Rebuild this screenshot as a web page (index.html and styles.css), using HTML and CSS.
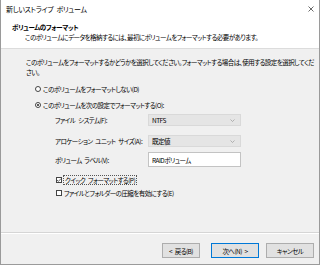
FILE: index.html
```html
<!DOCTYPE html>
<html lang="ja">
<head>
<meta charset="utf-8">
<link rel="stylesheet" href="styles.css">
</head>
<body>
<div class="window">
  <div class="top">
    <div class="titlebar">
      <span class="title">新しいストライプ ボリューム</span>
      <svg class="close" width="6" height="6" viewBox="0 0 6 6"><path d="M0.5 0.5 L5.5 5.5 M5.5 0.5 L0.5 5.5" stroke="#444" stroke-width="0.8" fill="none"/></svg>
    </div>
    <div class="header">
      <div class="h-title">ボリュームのフォーマット</div>
      <div class="h-sub">このボリュームにデータを格納するには、最初にボリュームをフォーマットする必要があります。</div>
    </div>
  </div>
  <div class="body">
    <p class="intro">このボリュームをフォーマットするかどうかを選択してください。フォーマットする場合は、使用する設定を選択してくだ<br>さい。</p>
    <div class="radio-row first"><span class="radio"></span><span>このボリュームをフォーマットしない(D)</span></div>
    <div class="radio-row second"><span class="radio on"></span><span>このボリュームを次の設定でフォーマットする(O):</span></div>
    <div class="form">
      <div class="field-row">
        <span class="label">ファイル システム(F):</span>
        <div class="combo"><span>NTFS</span><svg width="5" height="3" viewBox="0 0 5 3"><path d="M0.5 0.5 L2.5 2.5 L4.5 0.5" stroke="#999" stroke-width="0.7" fill="none"/></svg></div>
      </div>
      <div class="field-row r2">
        <span class="label">アロケーション ユニット サイズ(A):</span>
        <div class="combo"><span>既定値</span><svg width="5" height="3" viewBox="0 0 5 3"><path d="M0.5 0.5 L2.5 2.5 L4.5 0.5" stroke="#999" stroke-width="0.7" fill="none"/></svg></div>
      </div>
      <div class="field-row r3">
        <span class="label">ボリューム ラベル(V):</span>
        <div class="textbox">RAIDボリューム</div>
      </div>
    </div>
    <div class="check-row c1">
      <span class="checkbox"><svg width="6" height="6" viewBox="0 0 6 6"><path d="M1 3 L2.4 4.4 L5 1.6" stroke="#222" stroke-width="0.7" fill="none"/></svg></span>
      <span class="focus">クイック フォーマットする(P)</span>
    </div>
    <div class="check-row c2">
      <span class="checkbox"></span>
      <span>ファイルとフォルダーの圧縮を有効にする(E)</span>
    </div>
  </div>
  <div class="footer">
    <div class="btn back">&lt; 戻る(B)</div>
    <div class="btn next">次へ(N) &gt;</div>
    <div class="btn cancel">キャンセル</div>
  </div>
</div>
</body>
</html>
```
FILE: styles.css
```css
* { box-sizing: border-box; margin: 0; padding: 0; }
html, body { margin: 0; width: 320px; height: 265px; overflow: hidden; }
body {
  font-family: "Noto Sans CJK JP", "Noto Sans", sans-serif;
  font-size: 6.5px;
  letter-spacing: -0.55px;
  word-spacing: 1.8px;
  color: #000;
  font-feature-settings: "palt";
  background: #f0f0f0;
  white-space: nowrap;
}
.window {
  width: 320px;
  height: 265px;
  display: flex;
  flex-direction: column;
  border: 1px solid #9a9a9a;
  border-top: none;
  background: #f0f0f0;
}
.top {
  flex: none;
  height: 49px;
  background: #fff;
  border-bottom: 1px solid #dcdcdc;
}
.titlebar {
  height: 18px;
  display: flex;
  align-items: center;
  justify-content: space-between;
  padding: 0 5px 0 5px;
  line-height: 10px;
}
.title { font-size: 7px; letter-spacing: -0.3px; }
.close { display: block; }
.header { padding: 4px 0 0 11px; line-height: 10px; }
.h-title { font-weight: bold; letter-spacing: -0.35px; }
.h-sub { padding-left: 13px; }
.body { flex: 1; padding: 8px 0 0 25px; line-height: 10px; }
.intro { line-height: 10px; }
.radio-row { display: flex; align-items: center; height: 10px; gap: 2px; margin-left: 9px; }
.radio-row.first { margin-top: 7px; }
.radio-row.second { margin-top: 6px; }
.radio {
  width: 6px; height: 6px; border: 1px solid #444; border-radius: 50%;
  background: #fff; position: relative; flex: none;
}
.radio.on::after {
  content: ""; position: absolute; left: 1px; top: 1px; width: 2px; height: 2px;
  border-radius: 50%; background: #222;
}
.form { margin: 4px 0 0 29px; }
.field-row { display: flex; align-items: center; }
.field-row.r2 { margin-top: 9px; }
.field-row.r3 { margin-top: 5px; }
.label { width: 93px; flex: none; }
.combo {
  width: 93px; height: 12px; background: #e5e5e5; border: 1px solid #d9d9d9;
  display: flex; align-items: center; justify-content: space-between; padding: 0 5px 0 3px;
}
.combo svg { display: block; }
.textbox {
  width: 93px; height: 15px; background: #fff; border: 1px solid #c3c3c3;
  display: flex; align-items: center; padding-left: 3px;
}
.check-row { display: flex; align-items: center; height: 10px; gap: 1px; margin-left: 30px; }
.check-row.c1 { margin-top: 8px; }
.check-row.c2 { margin-top: 3px; gap: 2px; }
.checkbox {
  width: 6px; height: 6px; border: 1px solid #444; background: #fff; flex: none;
  display: flex; align-items: center; justify-content: center; overflow: hidden;
}
.checkbox svg { display: block; flex: none; }
.focus { border: 1px dotted #555; padding: 0 1px; line-height: 8px; }
.footer {
  flex: none; height: 32px; border-top: 1px solid #d5d5d5;
  box-shadow: inset 0 1px #fff;
  display: flex; justify-content: flex-end; align-items: flex-start;
  padding: 10px 5px 0 0;
}
.btn {
  height: 15px; border: 1px solid #adadad; background: #e1e1e1;
  display: flex; align-items: center; justify-content: center; line-height: 10px;
}
.back { width: 38px; }
.next { width: 48px; margin-left: 11px; border-color: #0078d7; }
.cancel { width: 48px; margin-left: 7px; }
```
